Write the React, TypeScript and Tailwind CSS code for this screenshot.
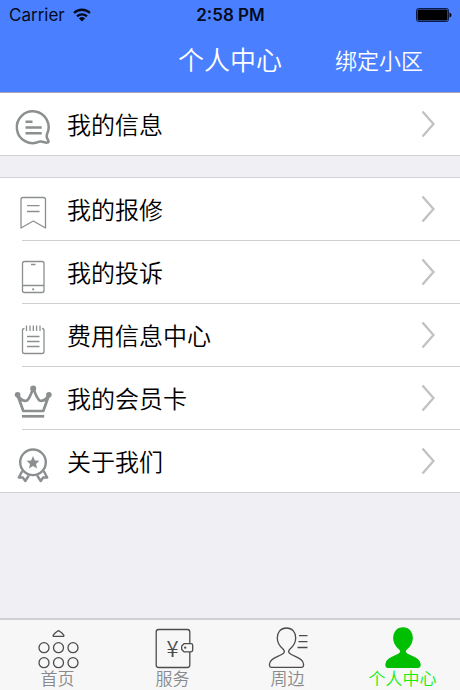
import type { ReactNode } from "react";

type Item = { label: string; icon: ReactNode };
type Tab = { label: string; icon: ReactNode; active?: boolean };

const messageIcon = (
    <g strokeWidth="2.5">
        <path d="M32 32.2A15.900 15.900 0 1 0 24.3 39.700C27 38.700 29.5 41 32 40.600Q34.200 40.300 33.300 38.600C31.800 36.500 31 35 32 32.200Z" />
        <path d="M10.5 19.7H17.500M10.500 25.500H26.700M10.500 31.200H26.700" />
    </g>
);

const bookmarkIcon = (
    <g strokeWidth="1.3">
        <path d="M6 41V12.5Q6 10.5 8 10.5H28.5Q30.5 10.5 30.5 12.5V41L18.3 34Z" />
        <path d="M12 18.7H24.5M12 24.5H24.5" />
    </g>
);

const phoneIcon = (
    <g strokeWidth="1.3">
        <rect x="7.5" y="11.5" width="21.5" height="31" rx="2" />
        <path d="M7.5 35.5H29M16 14.5H20.5" />
        <circle cx="18.2" cy="39.3" r="0.5" />
    </g>
);

const notepadIcon = (
    <g strokeWidth="1.3">
        <path d="M9.5 15.5Q7.5 15.5 7.5 17.5V38.5Q7.5 40.5 9.5 40.5H27Q29 40.5 29 38.5V17.5Q29 15.5 27 15.5" />
        <path d="M11.5 12.5V18M15 12.5V18M18.3 12.5V18M21.6 12.5V18M25 12.5V18" />
        <path d="M12 23.5H24.5M12 28.5H24.5M12 33.5H24.5" />
    </g>
);

const crownIcon = (
    <g strokeWidth="2.7">
        <path d="M2.5 19L8.3 35H28.3L34 19C31 24 28 25.5 24.5 24.5C21.5 22 20 17 18.2 12C16.4 17 15 22 12 24.5C8.5 25.5 5.5 24 2.5 19Z" />
        <path d="M7 40.3H29.2" />
        <g fill="currentColor" stroke="none">
            <circle cx="2.6" cy="18.7" r="2.8" />
            <circle cx="18.2" cy="12.4" r="3" />
            <circle cx="33.9" cy="18.7" r="2.8" />
        </g>
    </g>
);

const medalIcon = (
    <g strokeWidth="2.4">
        <circle cx="18" cy="23.3" r="12.8" />
        <path
            d="M18 16.9L19.9 21.4L24.4 21.8L21 24.9L22.1 29.4L18 27L13.9 29.4L15 24.9L11.6 21.8L16.1 21.4Z"
            fill="currentColor"
            stroke="none"
        />
        <path d="M7.3 32L3.8 38.5L7.8 38.5L10.3 42L13.8 36.500" />
        <path d="M28.7 32L32.2 38.5L28.2 38.5L25.7 42L22.2 36.500" />
    </g>
);

const homeIcon = (
    <g>
        <path d="M21.4 5.2Q22.5 4.3 23.6 5.2Q26 6.8 27.8 9.2Q28.2 10.3 27 10.3H18Q16.8 10.3 17.2 9.2Q19 6.8 21.4 5.2Z" />
        <circle cx="8" cy="21.7" r="5" />
        <circle cx="22.5" cy="21.7" r="5" />
        <circle cx="37" cy="21.7" r="5" />
        <circle cx="8" cy="36.7" r="5" />
        <circle cx="22.5" cy="36.7" r="5" />
        <circle cx="37" cy="36.7" r="5" />
    </g>
);

const walletIcon = (
    <g>
        <path d="M38.8 17.5V6Q38.8 3.5 36.3 3.5H7.7Q5.2 3.5 5.2 6V39Q5.2 41.5 7.7 41.5H36.3Q38.8 41.5 38.8 39V26" />
        <path d="M33 17.7H40Q41.7 17.7 41.7 19.5V24Q41.7 25.8 40 25.8H33L30.7 23.5V20Z" />
        <circle cx="34.2" cy="21.7" r="0.5" />
        <text
            x="21.5"
            y="31"
            textAnchor="middle"
            fill="currentColor"
            stroke="none"
            className="font-['Noto_Sans_CJK_SC',sans-serif] text-[22px] font-[350]"
        >
            ¥
        </text>
    </g>
);

const bust =
    "M20.5 2C14.5 2 11.3 6.5 11.3 12C11.3 17 13.5 20 17 23C19 25 18.8 26.5 16.5 28C12 31 3.5 32.5 3.5 38V39.5Q3.5 41.3 5.3 41.3H35.7Q37.5 41.3 37.5 39.5V38C37.5 32.5 29 31 24.5 28C22.2 26.5 22 25 24 23C27.5 20 29.7 17 29.7 12C29.7 6.5 26.5 2 20.5 2Z";

const nearbyIcon = (
    <g>
        <path d={bust} />
        <path d="M33 9.7H41.5M32.5 15.7H41.5M31.5 21.5H41.5" />
    </g>
);

const profileIcon = <path d={bust} transform="translate(1.5 0)" fill="#00bf00" stroke="#00bf00" />;

const groups: Item[][] = [
    [{ label: "我的信息", icon: messageIcon }],
    [
        { label: "我的报修", icon: bookmarkIcon },
        { label: "我的投诉", icon: phoneIcon },
        { label: "费用信息中心", icon: notepadIcon },
        { label: "我的会员卡", icon: crownIcon },
        { label: "关于我们", icon: medalIcon },
    ],
];

const tabs: Tab[] = [
    { label: "首页", icon: homeIcon },
    { label: "服务", icon: walletIcon },
    { label: "周边", icon: nearbyIcon },
    { label: "个人中心", icon: profileIcon, active: true },
];

function StatusBar() {
    return (
        <div className="grid h-[30px] grid-cols-3 items-center pr-2 pl-[9px] font-['Inter',sans-serif] text-[17px] leading-none text-[#060b1c]">
            <div className="flex items-center gap-2">
                <span>Carrier</span>
                <svg width="18" height="14" viewBox="0 0 18 14" fill="none" stroke="currentColor" strokeWidth="2.3" aria-hidden>
                    <path d="M1 5A11.5 11.5 0 0 1 17 5" />
                    <path d="M4 8.3A7.2 7.2 0 0 1 14 8.3" />
                    <path d="M9 13.5L5.9 10.4A4.5 4.5 0 0 1 12.1 10.4Z" fill="currentColor" stroke="none" />
                </svg>
            </div>
            <span className="text-center font-semibold">2:58 PM</span>
            <svg className="justify-self-end" width="36" height="14" viewBox="0 0 36 14" aria-hidden>
                <rect x="0.5" y="0.5" width="32" height="13" rx="2" fill="none" stroke="#0b1a4a" />
                <rect x="1.5" y="1.5" width="30" height="11" rx="1" fill="#000" />
                <path d="M33.5 4.5Q35.5 5 35.5 7T33.5 9.5Z" fill="#000" />
            </svg>
        </div>
    );
}

function Row({ label, icon, last }: Item & { last: boolean }) {
    return (
        <li>
            <a href="#" className="flex h-[62px] items-center gap-4 pr-[25px] pl-[15px]">
                <svg className="shrink-0 overflow-visible text-[#8b8f90]" width="36" height="44" viewBox="0 0 36 44" fill="none" stroke="currentColor" strokeLinejoin="round" aria-hidden>
                    {icon}
                </svg>
                <span className="flex-1 text-2xl font-[350]">{label}</span>
                <svg width="14" height="28" viewBox="0 0 14 28" fill="none" stroke="#c2c2c5" strokeWidth="2.4" aria-hidden>
                    <path d="M1.5 1.5L12.5 14L1.5 26.5" />
                </svg>
            </a>
            {!last && <div className="ml-[22px] h-px bg-[#d0d0d4]" />}
        </li>
    );
}

export default function App() {
    return (
        <div className="flex min-h-screen flex-col bg-[#efeff4] font-['Noto_Sans_CJK_SC',sans-serif] text-black">
            <header className="border-b border-[#a7aab5] bg-[#4a80ff]">
                <StatusBar />
                <div className="grid h-[62px] grid-cols-[1fr_auto_1fr] items-center pb-1 font-[350] text-white">
                    <h1 className="col-start-2 text-[26px] leading-none">个人中心</h1>
                    <button type="button" className="justify-self-end pr-[37px] text-[22px] leading-none">
                        绑定小区
                    </button>
                </div>
            </header>

            <main className="flex flex-1 flex-col gap-[21px]">
                {groups.map((items, i) => (
                    <ul key={items[0].label} className={i === 0 ? "border-b border-[#d2d2d6] bg-white" : "border-y border-[#d2d2d6] bg-white"}>
                        {items.map((item, j) => (
                            <Row key={item.label} {...item} last={j === items.length - 1} />
                        ))}
                    </ul>
                ))}
            </main>

            <nav className="grid grid-cols-4 border-t-2 border-[#d0d0d4] bg-[#f7f7f8]">
                {tabs.map((tab) => (
                    <a
                        key={tab.label}
                        href="#"
                        className={
                            tab.active
                                ? "flex h-[70px] flex-col items-center pt-1.5 text-[#10ee10]"
                                : "flex h-[70px] flex-col items-center pt-1.5 text-[#8a8a8c]"
                        }
                    >
                        <svg className="shrink-0" width="44" height="44" viewBox="0 0 44 44" fill="none" stroke="#4c4c4c" strokeWidth="1.3" color="#4c4c4c" strokeLinejoin="round" aria-hidden>
                            {tab.icon}
                        </svg>
                        <span className="text-[17px] leading-4 font-[350]">{tab.label}</span>
                    </a>
                ))}
            </nav>
        </div>
    );
}
